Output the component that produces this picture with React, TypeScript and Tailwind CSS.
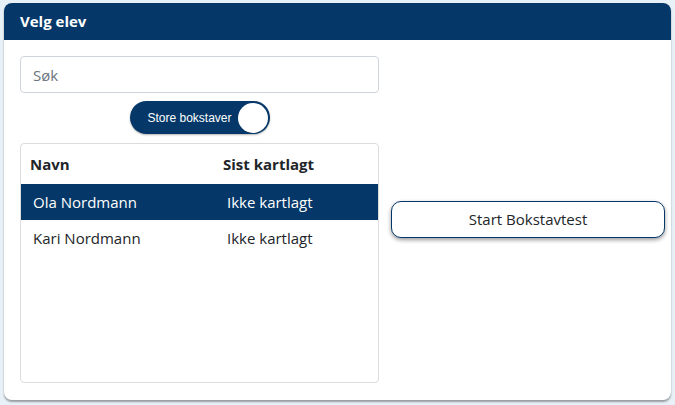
export default function App() {
  const students = [
    { name: 'Ola Nordmann', status: 'Ikke kartlagt', selected: true },
    { name: 'Kari Nordmann', status: 'Ikke kartlagt', selected: false },
  ]

  return (
    <div className="w-[675px] h-[405px] bg-[#e8f1f7] px-[4px] pt-[3px] pb-[5px] font-['Open_Sans',sans-serif]">
      <div className="h-full bg-white rounded-[8px] shadow-[0_2px_2px_rgba(0,0,0,0.35)] flex flex-col overflow-hidden">
        <div className="h-[37px] bg-[#053868] flex items-center px-[16px] shrink-0">
          <h1 className="text-white text-[15px] font-bold">Velg elev</h1>
        </div>

        <div className="flex flex-1 pt-[16px] pl-[16px] pr-[6px] pb-[17px] gap-[12px]">
          {/* Left column */}
          <div className="w-[359px] flex flex-col shrink-0">
            <input
              type="text"
              placeholder="Søk"
              className="h-[37px] w-full rounded-[4px] border border-[#ced4da] px-[12px] text-[15px] placeholder-[#6c757d] focus:outline-none"
            />
            <div className="flex justify-center mt-[8px]">
              <button className="w-[140px] h-[33px] rounded-full bg-[#053868] flex items-center pl-[18px] pr-[2px] justify-between shadow-[0_1px_2px_rgba(0,0,0,0.3)]">
                <span className="text-white text-[12px] font-['Liberation_Sans',sans-serif]">Store bokstaver</span>
                <span className="w-[30px] h-[30px] rounded-full bg-white"></span>
              </button>
            </div>
            <div className="mt-[9px] flex-1 border border-[#dcdcdc] rounded-[4px] overflow-hidden">
              <div className="h-[40px] flex items-center text-[15px] font-bold text-[#212529]">
                <span className="w-[202px] pl-[9px]">Navn</span>
                <span>Sist kartlagt</span>
              </div>
              {students.map(s => (
                <div
                  key={s.name}
                  className={`h-[36px] flex items-center text-[15px] ${s.selected ? 'bg-[#053868] text-white' : 'text-[#212529]'}`}
                >
                  <span className="w-[206px] pl-[12px]">{s.name}</span>
                  <span>{s.status}</span>
                </div>
              ))}
            </div>
          </div>

          {/* Right column */}
          <div className="flex-1 flex items-center">
            <button className="w-full h-[37px] rounded-[10px] border border-[#053868] bg-white text-[15px] text-[#212529] shadow-[0_2px_4px_rgba(0,0,0,0.4)]">
              Start Bokstavtest
            </button>
          </div>
        </div>
      </div>
    </div>
  )
}
